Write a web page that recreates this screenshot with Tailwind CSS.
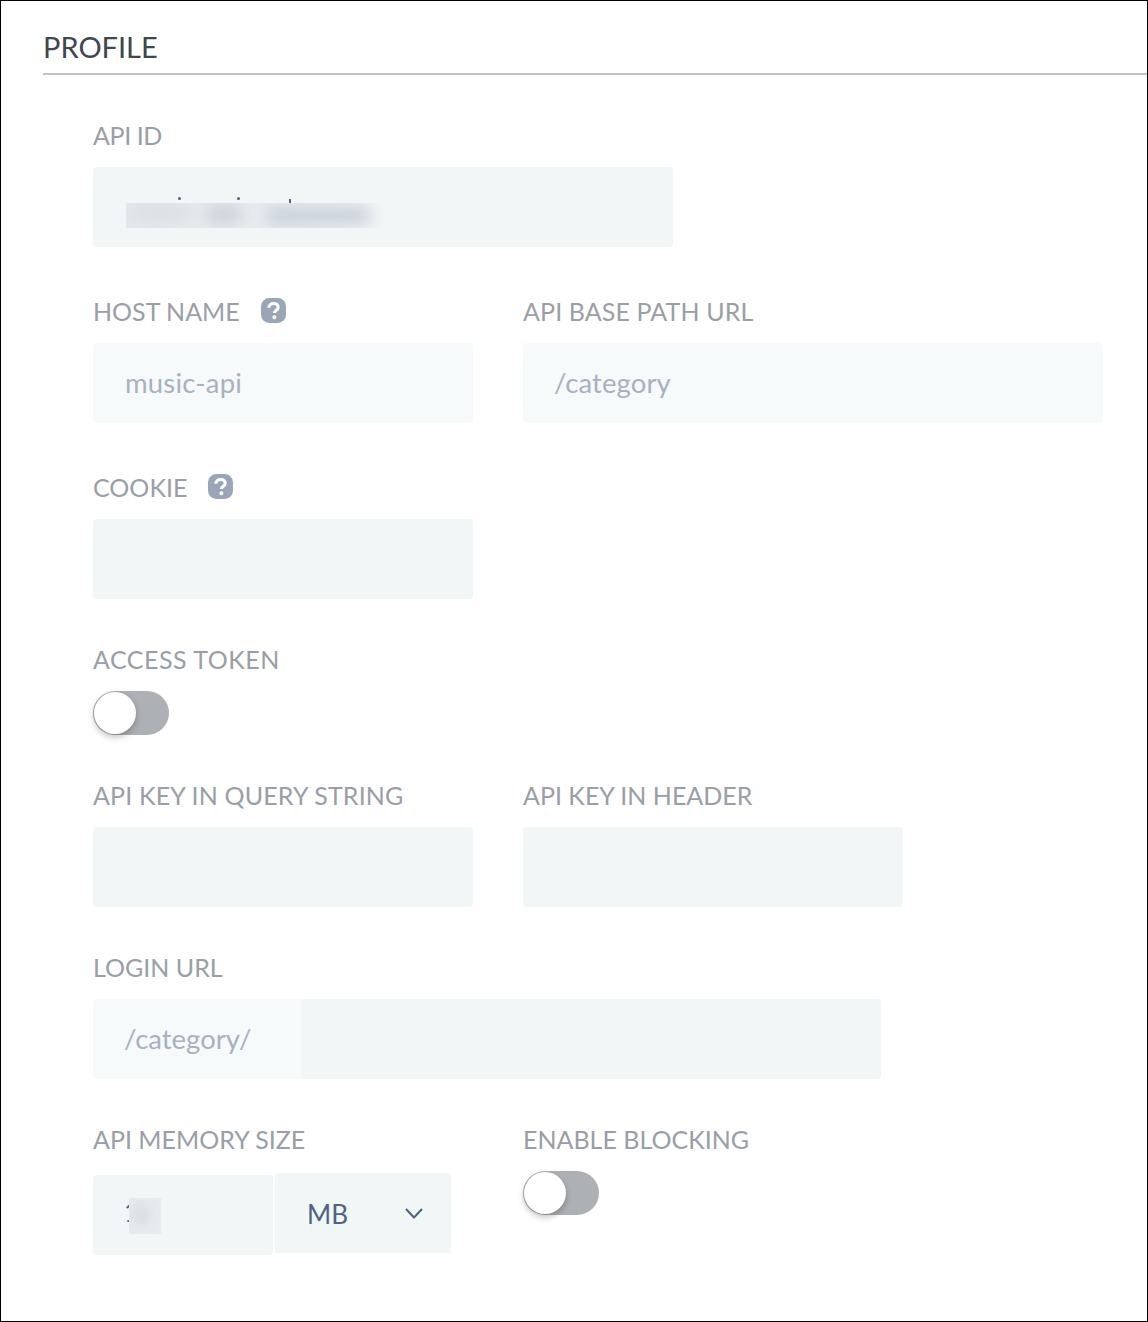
<!DOCTYPE html>
<html>
<head>
<meta charset="utf-8">
<script src="https://cdn.jsdelivr.net/npm/@tailwindcss/browser@4"></script>
</head>
<body class="bg-white">
<div class="w-[1148px] h-[1322px] border border-black bg-white font-['Lato',sans-serif] overflow-hidden">
  <div class="ml-[42px] h-[74px] border-b-2 border-[#c0c2c6] pt-[28px]">
    <h2 class="text-[29px] leading-[36px] text-[#40474f] font-normal">PROFILE</h2>
  </div>
  <div class="pl-[92px] flex flex-col">
    <div class="mt-[46px]">
      <label class="block h-[30px] leading-[28px] mb-[16px] text-[25px] tracking-[-0.4px] text-[#9a9ea6]">API ID</label>
      <div class="relative w-[580px] h-[80px] rounded-[4px] bg-[#f1f6f6]">
        <span class="absolute left-[85px] top-[30px] size-[3px] rounded-full bg-[#4f6280]"></span>
        <span class="absolute left-[144px] top-[30px] size-[3px] rounded-full bg-[#4f6280]"></span>
        <span class="absolute left-[196px] top-[32px] w-[2px] h-[4px] bg-[#4f6280]"></span>
        <div class="absolute left-[33px] top-[36px] w-[265px] h-[25px] bg-gradient-to-r from-[#e4e9ed] via-[#e6ebee] to-[#f1f6f6] overflow-hidden">
          <div class="absolute left-[4px] top-[2px] w-[60px] h-[16px] rounded-full bg-[#dbe0e5] blur-[7px]"></div>
          <div class="absolute left-[80px] top-[2px] w-[36px] h-[18px] rounded-full bg-[#cdd3dc] blur-[7px]"></div>
          <div class="absolute left-[140px] top-[3px] w-[105px] h-[19px] rounded-full bg-[#cdd3dc] blur-[7px]"></div>
        </div>
      </div>
    </div>
    <div class="mt-[46px] flex gap-[50px]">
      <div>
        <label class="flex items-center h-[34px] pt-[4px] mb-[16px] text-[25px] text-[#9a9ea6]">HOST NAME
          <svg class="ml-[21px] -mt-[4px]" width="25" height="25" viewBox="0 0 24 24"><rect width="24" height="24" rx="8" fill="#9aa6b8"/><path d="M7.6 9.4c0-2.6 2-4.1 4.5-4.1s4.4 1.4 4.4 3.6c0 3-3.6 2.9-3.6 5.6" fill="none" stroke="#fff" stroke-width="3"/><circle cx="12.8" cy="18.4" r="1.9" fill="#fff"/></svg>
        </label>
        <div class="flex items-center w-[380px] h-[80px] rounded-[4px] bg-[#f7fafb] pl-[32px] text-[27.5px] tracking-[0.2px] text-[#a9b1c0]">music-api</div>
      </div>
      <div>
        <label class="flex items-center h-[34px] pt-[4px] mb-[16px] text-[25px] tracking-[0.1px] text-[#9a9ea6]">API BASE PATH URL</label>
        <div class="flex items-center w-[580px] h-[80px] rounded-[4px] bg-[#f7fafb] pl-[31px] text-[27.5px] tracking-[0.1px] text-[#a9b1c0]">/category</div>
      </div>
    </div>
    <div class="mt-[46px]">
      <label class="flex items-center h-[34px] pt-[4px] mb-[16px] text-[25px] text-[#9a9ea6]">COOKIE
        <svg class="ml-[21px] -mt-[4px]" width="25" height="25" viewBox="0 0 24 24"><rect width="24" height="24" rx="8" fill="#9aa6b8"/><path d="M7.6 9.4c0-2.6 2-4.1 4.5-4.1s4.4 1.4 4.4 3.6c0 3-3.6 2.9-3.6 5.6" fill="none" stroke="#fff" stroke-width="3"/><circle cx="12.8" cy="18.4" r="1.9" fill="#fff"/></svg>
      </label>
      <div class="w-[380px] h-[80px] rounded-[4px] bg-[#f1f6f6]"></div>
    </div>
    <div class="mt-[46px]">
      <label class="block h-[30px] leading-[28px] mb-[16px] text-[25px] tracking-[0.5px] text-[#9a9ea6]">ACCESS TOKEN</label>
      <div class="w-[76px] h-[44px] rounded-full bg-[#adb0b4] p-px"><div class="w-[42px] h-[42px] rounded-full bg-white shadow-[0_3px_6px_rgba(0,0,0,0.25)]"></div></div>
    </div>
    <div class="mt-[46px] flex gap-[50px]">
      <div>
        <label class="block h-[30px] leading-[28px] mb-[16px] text-[25px] tracking-[0.15px] text-[#9a9ea6]">API KEY IN QUERY STRING</label>
        <div class="w-[380px] h-[80px] rounded-[4px] bg-[#f1f6f6]"></div>
      </div>
      <div>
        <label class="block h-[30px] leading-[28px] mb-[16px] text-[25px] text-[#9a9ea6]">API KEY IN HEADER</label>
        <div class="w-[380px] h-[80px] rounded-[4px] bg-[#f1f6f6]"></div>
      </div>
    </div>
    <div class="mt-[46px]">
      <label class="block h-[30px] leading-[28px] mb-[16px] text-[25px] text-[#9a9ea6]">LOGIN URL</label>
      <div class="flex w-[788px] h-[80px]">
        <div class="flex items-center w-[208px] rounded-l-[4px] bg-[#f7fafb] pl-[31px] text-[27.5px] text-[#a9b1c0]">/category/</div>
        <div class="w-[580px] rounded-[4px] bg-[#f1f6f6]"></div>
      </div>
    </div>
    <div class="mt-[46px] flex gap-[72px]">
      <div>
        <label class="block h-[30px] leading-[28px] mb-[18px] text-[25px] text-[#9a9ea6]">API MEMORY SIZE</label>
        <div class="flex items-start gap-[2px]">
          <div class="relative mt-[2px] w-[180px] h-[80px] rounded-[4px] bg-[#f1f6f6]">
            <span class="absolute left-[31px] top-[22px] text-[26px] leading-[30px] text-[#4f6280]">1</span>
            <div class="absolute left-[36px] top-[23px] w-[32px] h-[36px] overflow-hidden bg-[#e7ebee]">
              <div class="absolute left-[2px] top-[6px] w-[20px] h-[22px] rounded-full bg-[#d9dfe3] blur-[5px]"></div>
            </div>
          </div>
          <div class="flex items-center justify-between w-[176px] h-[80px] rounded-t-[4px] bg-[#f1f6f6] pl-[32px] pr-[28px] pt-[2px] text-[26px] text-[#4f6280]">MB
            <svg class="-mt-[2px]" width="18" height="11" viewBox="0 0 18 11"><path d="M1 1l8 8.5 8-8.5" fill="none" stroke="#4f6280" stroke-width="2"/></svg>
          </div>
        </div>
      </div>
      <div>
        <label class="block h-[30px] leading-[28px] mb-[16px] text-[25px] text-[#9a9ea6]">ENABLE BLOCKING</label>
        <div class="w-[76px] h-[44px] rounded-full bg-[#adb0b4] p-px"><div class="w-[42px] h-[42px] rounded-full bg-white shadow-[0_3px_6px_rgba(0,0,0,0.25)]"></div></div>
      </div>
    </div>
  </div>
</div>
</body>
</html>
